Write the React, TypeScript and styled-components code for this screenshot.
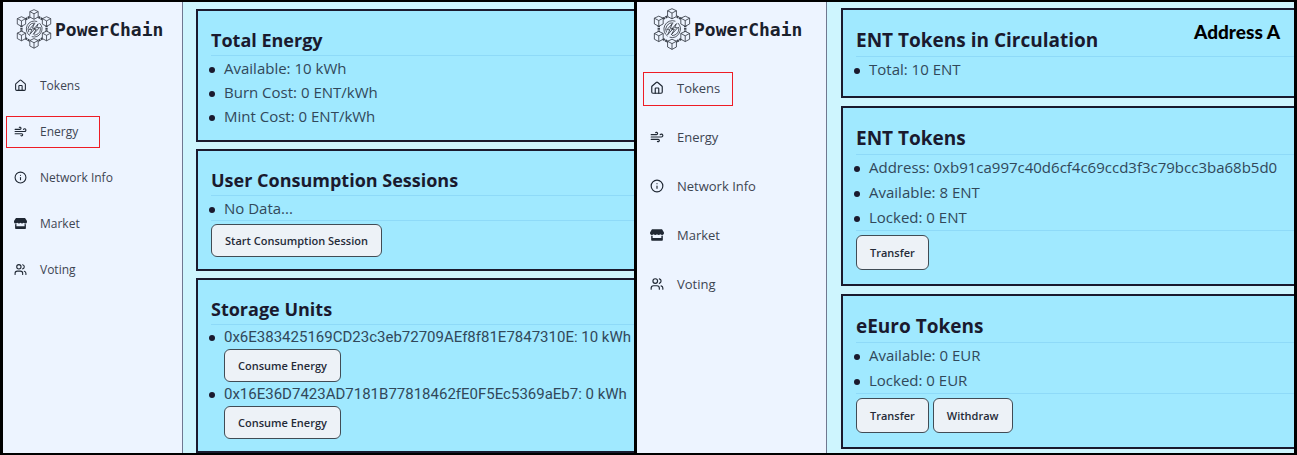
import React from "react";
import styled, { ThemeProvider, createGlobalStyle } from "styled-components";
import { House, Wind, Info, Users } from "lucide-react";
import { FaStore } from "react-icons/fa";

interface Density {
  sidebar: number;
  sidebarPad: string;
  logo: number;
  brandRow: number;
  brandFont: number;
  navTop: number;
  navFont: number;
  navIcon: number;
  navHeight: number;
  navGap: number;
  navPad: string;
  navSpace: number;
  pagePad: string;
  cardGap: number;
  cardPad: string;
  titleFont: number;
  titleLine: number;
  rowLine: number;
  actionTop: number;
  buttonHeight: number;
}

const compact: Density = {
  sidebar: 180,
  sidebarPad: "6px 3px 0",
  logo: 36,
  brandRow: 42,
  brandFont: 18,
  navTop: 20,
  navFont: 12,
  navIcon: 13,
  navHeight: 32,
  navGap: 14,
  navPad: "0 21px 2px 7px",
  navSpace: 13,
  pagePad: "7px 0 0 13px",
  cardGap: 7,
  cardPad: "14px 0 12px 13px",
  titleFont: 18,
  titleLine: 30,
  rowLine: 24,
  actionTop: 3,
  buttonHeight: 33,
};

const regular: Density = {
  sidebar: 190,
  sidebarPad: "5px 6px 0",
  logo: 38,
  brandRow: 44,
  brandFont: 18,
  navTop: 21,
  navFont: 13,
  navIcon: 14,
  navHeight: 34,
  navGap: 15,
  navPad: "0 12px 2px 6px",
  navSpace: 13,
  pagePad: "6px 0 0 14px",
  cardGap: 8,
  cardPad: "15px 0 14px 13px",
  titleFont: 19,
  titleLine: 31,
  rowLine: 25,
  actionTop: 4,
  buttonHeight: 35,
};

const GlobalStyle = createGlobalStyle`
  * { box-sizing: border-box; }
  body {
    margin: 0;
    background: #000;
    font-family: "Open Sans", "Noto Sans", sans-serif;
  }
`;

const Frame = styled.main`
  display: grid;
  grid-template-columns: 631fr 657fr;
  gap: 3px;
  min-height: 100vh;
  padding: 2px 3px;
  background: #000;
`;

const Pane = styled.section<{ theme: Density }>`
  position: relative;
  display: grid;
  grid-template-columns: ${({ theme }) => theme.sidebar}px minmax(0, 1fr);
  min-width: 0;
  overflow: hidden;
  background: #cef5fe;
`;

const Sidebar = styled.aside<{ theme: Density }>`
  padding: ${({ theme }) => theme.sidebarPad};
  background: #edf4ff;
  border-right: 1px solid #6f7890;
`;

const Brand = styled.div<{ theme: Density }>`
  display: flex;
  align-items: center;
  gap: 3px;
  height: ${({ theme }) => theme.brandRow}px;
  padding-left: 10px;
  font: 700 ${({ theme }) => theme.brandFont}px "DejaVu Sans Mono", monospace;
  color: #1a202c;
`;

const Nav = styled.nav<{ theme: Density }>`
  display: flex;
  flex-direction: column;
  align-items: flex-start;
  gap: ${({ theme }) => theme.navGap}px;
  margin-top: ${({ theme }) => theme.navTop}px;
`;

const NavLink = styled.a<{ theme: Density; $active?: boolean }>`
  display: flex;
  align-items: center;
  gap: ${({ theme }) => theme.navSpace}px;
  height: ${({ theme }) => theme.navHeight}px;
  padding: ${({ theme }) => theme.navPad};
  border: 1px solid ${({ $active }) => ($active ? "#ee1c25" : "transparent")};
  font-size: ${({ theme }) => theme.navFont}px;
  color: #3d4552;
  text-decoration: none;
  white-space: nowrap;

  svg {
    width: ${({ theme }) => theme.navIcon}px;
    height: ${({ theme }) => theme.navIcon}px;
    color: #1f2733;
  }
`;

const Content = styled.div<{ theme: Density }>`
  display: flex;
  flex-direction: column;
  gap: ${({ theme }) => theme.cardGap}px;
  min-width: 0;
  padding: ${({ theme }) => theme.pagePad};
`;

const Card = styled.article<{ theme: Density }>`
  padding: ${({ theme }) => theme.cardPad};
  border: 2px solid #1a1a2e;
  border-right: 0;
  background: #a0e9ff;
`;

const CardTitle = styled.h2<{ theme: Density }>`
  margin: 0;
  border-bottom: 1px solid #8edaf8;
  font-size: ${({ theme }) => theme.titleFont}px;
  line-height: ${({ theme }) => theme.titleLine}px;
  font-weight: 700;
  color: #1a1a2e;
`;

const List = styled.ul<{ theme: Density; $ids?: boolean }>`
  margin: 0;
  padding: 0 0 0 13px;
  list-style: none;
  font-family: ${({ $ids }) => ($ids ? "Roboto, sans-serif" : "inherit")};
  font-size: 15px;
  line-height: ${({ theme }) => theme.rowLine}px;
  color: #31485a;
  white-space: nowrap;
`;

const Item = styled.li`
  &::before {
    content: "";
    display: inline-block;
    width: 6px;
    height: 6px;
    margin: 0 9px 0 -15px;
    border-radius: 50%;
    background: #1a1a2e;
    vertical-align: middle;
  }
`;

const Actions = styled.div<{ theme: Density }>`
  display: flex;
  gap: 4px;
  padding-top: ${({ theme }) => theme.actionTop}px;
  border-top: 1px solid #8edaf8;
`;

const Button = styled.button<{ theme: Density }>`
  display: block;
  height: ${({ theme }) => theme.buttonHeight}px;
  padding: 0 13px;
  border: 1px solid #414c55;
  border-radius: 6px;
  background: #edf2f7;
  font: 600 11px "Open Sans", "Noto Sans", sans-serif;
  color: #252b38;
  white-space: nowrap;
`;

const AddressTag = styled.strong`
  position: absolute;
  top: 18px;
  right: 14px;
  font: 900 19px/24px Lato, sans-serif;
  color: #000;
`;

const cubes = [
  [56, 17],
  [95, 39],
  [95, 84],
  [56, 107],
  [17, 84],
  [17, 39],
];

function Logo({ size }: { size: number }) {
  return (
    <svg width={size} viewBox="0 0 112 124" fill="none" stroke="#2c323c" strokeWidth="2.4" aria-hidden="true">
      <path d="M56 17 95 39V84L56 107 17 84V39Z" strokeWidth="7" strokeDasharray="6 2" stroke="#3c424c" />
      {cubes.map(([x, y]) => (
        <g key={`${x}-${y}`} transform={`translate(${x} ${y})`}>
          <path d="M0-15 13-9V8L0 15-13 8V-9Z" fill="#edf4ff" />
          <path d="M-13-9 0-2 13-9M0-2V15" />
        </g>
      ))}
      <path d="M43 83A25 25 0 0 1 66 39M73 44A25 25 0 0 1 49 86" />
      <path d="M40 72A19 19 0 0 1 60 44M75 56A19 19 0 0 1 56 81" />
      <path d="M57 46 41 64H50L43 79 60 60H51Z" />
      <path d="M69 46 55 63H63L54 79 73 58H64Z" />
    </svg>
  );
}

const links = [
  { label: "Tokens", icon: <House /> },
  { label: "Energy", icon: <Wind /> },
  { label: "Network Info", icon: <Info /> },
  { label: "Market", icon: <FaStore /> },
  { label: "Voting", icon: <Users /> },
];

function SideMenu({ active, density }: { active: string; density: Density }) {
  return (
    <Sidebar>
      <Brand>
        <Logo size={density.logo} />
        PowerChain
      </Brand>
      <Nav>
        {links.map(({ label, icon }) => (
          <NavLink key={label} href="#" $active={label === active}>
            {icon}
            {label}
          </NavLink>
        ))}
      </Nav>
    </Sidebar>
  );
}

interface InfoCardProps {
  title: string;
  rows: string[];
  rowAction?: string;
  actions?: string[];
}

function InfoCard({ title, rows, rowAction, actions }: InfoCardProps) {
  return (
    <Card>
      <CardTitle>{title}</CardTitle>
      <List $ids={Boolean(rowAction)}>
        {rows.map((row) => (
          <Item key={row}>
            {row}
            {rowAction && <Button type="button">{rowAction}</Button>}
          </Item>
        ))}
      </List>
      {actions && (
        <Actions>
          {actions.map((action) => (
            <Button type="button" key={action}>
              {action}
            </Button>
          ))}
        </Actions>
      )}
    </Card>
  );
}

export default function App() {
  return (
    <>
      <GlobalStyle />
      <Frame>
        <ThemeProvider theme={compact}>
          <Pane>
            <SideMenu active="Energy" density={compact} />
            <Content>
              <InfoCard
                title="Total Energy"
                rows={["Available: 10 kWh", "Burn Cost: 0 ENT/kWh", "Mint Cost: 0 ENT/kWh"]}
              />
              <InfoCard
                title="User Consumption Sessions"
                rows={["No Data..."]}
                actions={["Start Consumption Session"]}
              />
              <InfoCard
                title="Storage Units"
                rows={[
                  "0x6E383425169CD23c3eb72709AEf8f81E7847310E: 10 kWh",
                  "0x16E36D7423AD7181B77818462fE0F5Ec5369aEb7: 0 kWh",
                ]}
                rowAction="Consume Energy"
              />
            </Content>
          </Pane>
        </ThemeProvider>
        <ThemeProvider theme={regular}>
          <Pane>
            <SideMenu active="Tokens" density={regular} />
            <Content>
              <InfoCard title="ENT Tokens in Circulation" rows={["Total: 10 ENT"]} />
              <InfoCard
                title="ENT Tokens"
                rows={[
                  "Address: 0xb91ca997c40d6cf4c69ccd3f3c79bcc3ba68b5d0",
                  "Available: 8 ENT",
                  "Locked: 0 ENT",
                ]}
                actions={["Transfer"]}
              />
              <InfoCard
                title="eEuro Tokens"
                rows={["Available: 0 EUR", "Locked: 0 EUR"]}
                actions={["Transfer", "Withdraw"]}
              />
            </Content>
            <AddressTag>Address A</AddressTag>
          </Pane>
        </ThemeProvider>
      </Frame>
    </>
  );
}
